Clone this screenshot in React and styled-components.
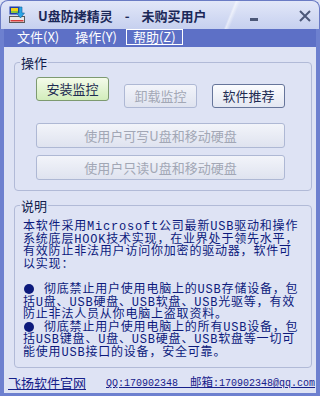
import React from "react";
import styled, { createGlobalStyle } from "styled-components";

const GlobalStyle = createGlobalStyle`
  html, body {
    margin: 0;
    padding: 0;
    background: #dee3f4;
  }
  body {
    font-family: "Noto Sans CJK SC", "Noto Sans", sans-serif;
  }
`;

const Window = styled.div`
  width: 320px;
  height: 396px;
  display: flex;
  flex-direction: column;
  background: #dee3f4;
`;

//title bar + window buttons
const TitleBar = styled.div`
  height: 29px;
  flex: none;
  display: flex;
  align-items: center;
  box-sizing: border-box;
  padding: 2px 8px 0 8px;
  border: 1px solid #6a7bc4;
  border-bottom: none;
  border-radius: 8px 8px 0 0;
  background: linear-gradient(
      112deg,
      transparent 0 71%,
      rgba(255, 255, 255, 0.55) 71.6%,
      transparent 72.8%
    ),
    linear-gradient(#e2e7f8, #c6d0ef);
`;

const AppIcon = styled.svg`
  width: 16px;
  height: 17px;
  margin-top: -3px;
  flex: none;
`;

const TitleText = styled.div`
  display: flex;
  gap: 12px;
  margin-left: 13px;
  font-size: 13px;
  font-weight: 700;
  line-height: 14px;
  color: #1b2858;
  white-space: nowrap;
`;

const Controls = styled.div`
  margin-left: auto;
  display: flex;
  align-items: center;
  gap: 41px;
`;

const Frame = styled.div`
  flex: 1;
  display: flex;
  flex-direction: column;
  border: solid #6d80cf;
  border-width: 0 4px 3px 4px;
  min-height: 0;
`;

const MenuBar = styled.div`
  height: 18px;
  flex: none;
  display: flex;
  align-items: flex-start;
  gap: 2px;
  padding-left: 6px;
  background: #5d70c6;
`;

const MenuItem = styled.div`
  height: 16px;
  box-sizing: border-box;
  padding: 0 6px;
  border: 1px solid ${(p) => (p.$active ? "#ffffff" : "transparent")};
  color: #ffffff;
  font-size: 13px;
  line-height: 14px;
  white-space: nowrap;
`;

const Body = styled.div`
  flex: 1;
  display: flex;
  flex-direction: column;
  padding: 9px 4px 0 6px;
  min-height: 0;
`;

const Group = styled.fieldset`
  margin: 0 0 0 4px;
  padding: 0;
  border: 1px solid #b1bad7;
  border-radius: 4px;
  min-width: 0;
  flex: ${(p) => (p.$grow ? "1" : "none")};
  & + & {
    margin-top: 8px;
  }
`;

const Legend = styled.legend`
  margin-left: 5px;
  padding: 0 1px;
  font-size: 13px;
  line-height: 13px;
  color: #101c4c;
`;

const ActionBody = styled.div`
  display: flex;
  flex-direction: column;
  padding: 8px 0 10px 21px;
`;

const ButtonRow = styled.div`
  display: flex;
  gap: 15px;
  margin-bottom: 15px;
`;

const Button = styled.button`
  box-sizing: border-box;
  width: ${(p) => (p.$wide ? "249px" : "73px")};
  height: ${(p) => (p.$wide ? "25px" : "24px")};
  margin: 0;
  padding: 0;
  border-radius: 3px;
  font-family: "Noto Sans CJK SC", sans-serif;
  font-size: 13px;
  line-height: 14px;
  border: 1px solid
    ${(p) =>
      p.$green ? "#7d9a70" : p.disabled ? "#aeb8d4" : "#66759a"};
  color: ${(p) => (p.disabled ? "#a2a7b5" : "#1e2b52")};
  background: ${(p) =>
    p.$green
      ? "linear-gradient(#f4fbea, #d2edbb)"
      : p.disabled
      ? "linear-gradient(#f2f4fa, #dfe3ef)"
      : "linear-gradient(#fbfcfe, #e3e7f2)"};
  & + & {
    margin-top: 7px;
  }
`;

const Description = styled.div`
  padding: 9px 0 0 8px;
  font-family: "Liberation Mono", "Noto Sans CJK SC", monospace;
  font-size: 12px;
  letter-spacing: 0.8px;
  line-height: 12.6px;
  color: #0c1a7c;
  white-space: nowrap;
`;

const Blank = styled.div`
  height: 12.6px;
`;

const Bullet = styled.span`
  display: inline-block;
  width: 10px;
  height: 10px;
  border-radius: 50%;
  background: currentColor;
  margin: 0 10px 0 1px;
  vertical-align: -1px;
`;

const Footer = styled.div`
  height: 25px;
  flex: none;
  display: flex;
  align-items: center;
  gap: 20px;
  padding: 4px 0 0 4px;
  box-sizing: border-box;
  color: #16208a;
  white-space: nowrap;
`;

const SiteLink = styled.a`
  font-size: 13px;
  line-height: 14px;
  color: inherit;
  text-decoration: underline;
  margin-left: -6px;
`;

const Contact = styled.span`
  font-family: "Liberation Mono", "Noto Sans CJK SC", monospace;
  font-size: 10px;
  line-height: 12px;
  text-decoration: underline;
  white-space: pre;
`;

const Cjk = styled.span`
  font-family: "Noto Sans CJK SC", sans-serif;
  font-size: 11.5px;
`;

function App() {
  return (
    <Window>
      <GlobalStyle />
      <TitleBar>
        <AppIcon viewBox="0 0 16 17">
          <rect x="0.5" y="0.5" width="10" height="8" fill="#1e3ca8" />
          <rect x="2" y="2" width="7" height="5" fill="#f0d21a" />
          <rect x="2" y="5" width="7" height="2" fill="#8cc83c" />
          <rect x="0.5" y="10.5" width="15" height="6" fill="#e8e8e8" stroke="#5a5a5a" />
          <rect x="1.5" y="14" width="13" height="1.5" fill="#d83a3a" />
          <path d="M10 1h3v6h2.5l-4 5-4-5H10z" fill="#2aa6e6" stroke="#13609c" strokeWidth="0.6" />
        </AppIcon>
        <TitleText>
          <span>U盘防拷精灵</span>
          <span>-</span>
          <span>未购买用户</span>
        </TitleText>
        <Controls>
          <svg width="8" height="3" viewBox="0 0 8 3" style={{ marginTop: 6 }}>
            <rect width="8" height="3" fill="#4c5878" />
          </svg>
          <svg width="12" height="12" viewBox="0 0 12 12">
            <path d="M1 1l10 10M11 1L1 11" stroke="#4c5878" strokeWidth="2" />
          </svg>
        </Controls>
      </TitleBar>
      <Frame>
        <MenuBar>
          <MenuItem>文件(X)</MenuItem>
          <MenuItem>操作(Y)</MenuItem>
          <MenuItem $active>帮助(Z)</MenuItem>
        </MenuBar>
        <Body>
          <Group>
            <Legend>操作</Legend>
            <ActionBody>
              <ButtonRow>
                <Button $green>安装监控</Button>
                <Button disabled>卸载监控</Button>
                <Button>软件推荐</Button>
              </ButtonRow>
              <Button $wide disabled>
                使用户可写U盘和移动硬盘
              </Button>
              <Button $wide disabled>
                使用户只读U盘和移动硬盘
              </Button>
            </ActionBody>
          </Group>
          <Group $grow>
            <Legend>说明</Legend>
            <Description>
              本软件采用Microsoft公司最新USB驱动和操作
              <br />
              系统底层HOOK技术实现，在业界处于领先水平，
              <br />
              有效防止非法用户访问你加密的驱动器，软件可
              <br />
              以实现：
              <Blank />
              <Bullet />
              彻底禁止用户使用电脑上的USB存储设备，包
              <br />
              括U盘、USB硬盘、USB软盘、USB光驱等，有效
              <br />
              防止非法人员从你电脑上盗取资料。
              <br />
              <Bullet />
              彻底禁止用户使用电脑上的所有USB设备，包
              <br />
              括USB键盘、U盘、USB硬盘、USB软盘等一切可
              <br />
              能使用USB接口的设备，安全可靠。
            </Description>
          </Group>
          <Footer>
            <SiteLink>飞扬软件官网</SiteLink>
            <Contact>
              QQ:170902348  <Cjk>邮箱</Cjk>:170902348@qq.com
            </Contact>
          </Footer>
        </Body>
      </Frame>
    </Window>
  );
}

export default App;
